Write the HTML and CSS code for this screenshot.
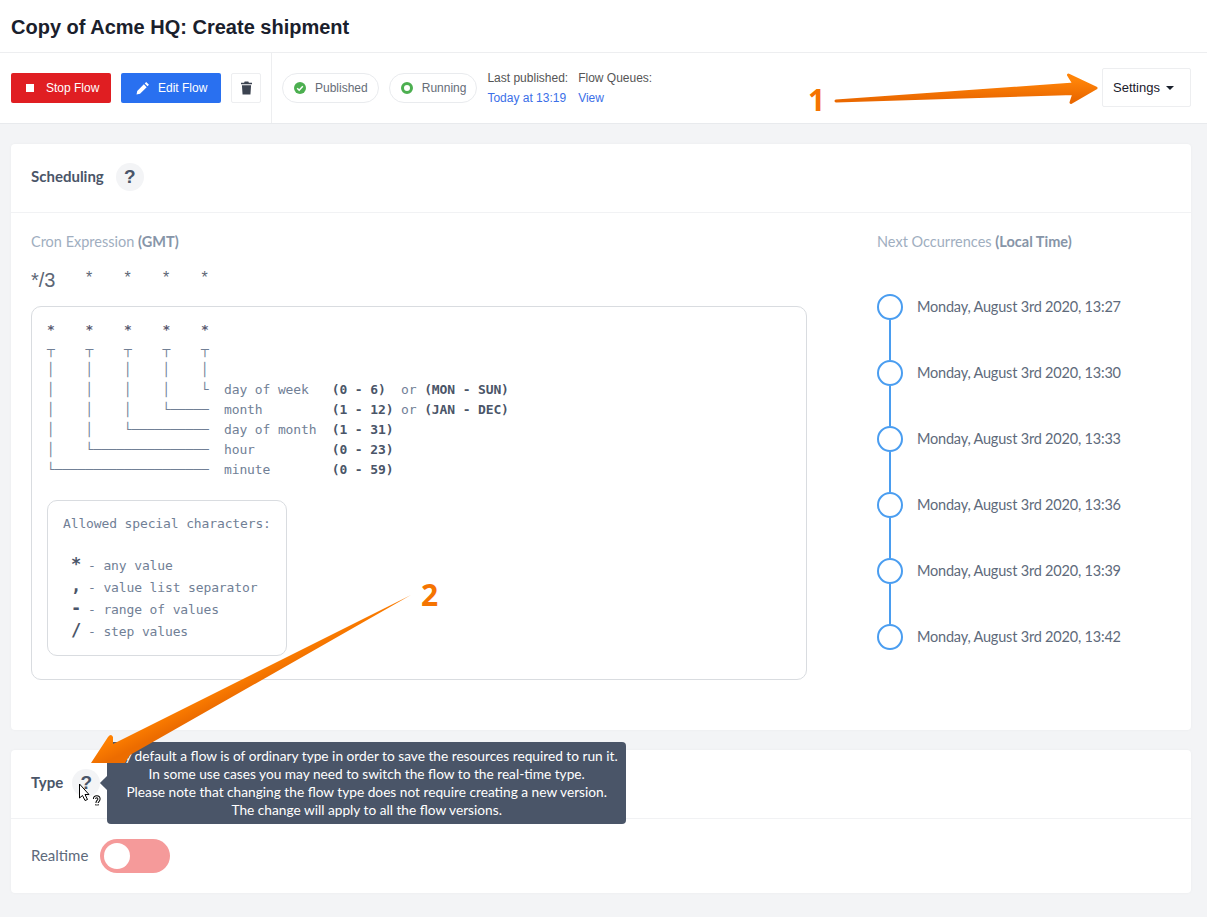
FILE: index.html
```html
<!DOCTYPE html>
<html lang="en">
<head>
  <meta charset="UTF-8" />
  <title>Copy of Acme HQ: Create shipment</title>
  <link rel="stylesheet" href="styles.css">
</head>
<body>
  <header class="title-bar">
    <h1>Copy of Acme HQ: Create shipment</h1>
  </header>

  <div class="toolbar">
    <div class="actions">
      <button class="btn btn-stop"><span class="stop-mark"></span>Stop Flow</button>
      <button class="btn btn-edit">
        <svg class="btn-icon" viewBox="0 0 16 16"><path fill="#fff" d="M11.6 1.2l3.2 3.2-1.6 1.6-3.2-3.2zM9 3.8l3.2 3.2-7.6 7.600-4 .8.8-4z"/></svg>
        Edit Flow
      </button>
      <button class="btn-trash">
        <svg viewBox="0 0 12 14" width="11" height="14"><path fill="#3c4350" d="M4 0h4l.6 1.200H12v1.600H0V1.200h3.400zM1 4h10l-.7 10H1.700z"/></svg>
      </button>
    </div>
    <div class="status">
      <span class="pill">
        <svg viewBox="0 0 12 12" width="12" height="12"><circle cx="6" cy="6" r="6" fill="#4caf50"/><path d="M3.200 6.200l2 2 3.600-4" fill="none" stroke="#fff" stroke-width="1.500"/></svg>
        Published
      </span>
      <span class="pill">
        <span class="running-dot"></span>
        Running
      </span>
      <div class="meta">
        <span>Last published:</span>
        <a>Today at 13:19</a>
      </div>
      <div class="meta">
        <span>Flow Queues:</span>
        <a>View</a>
      </div>
    </div>
    <button class="btn-settings">Settings<span class="caret"></span></button>
  </div>

  <main class="content">
    <section class="card">
      <div class="card-head">
        <h2>Scheduling</h2>
        <span class="help">?</span>
      </div>
      <div class="schedule">
        <div class="cron">
          <div class="label">Cron Expression <b>(GMT)</b></div>
          <div class="expr">
            <span class="expr-first">*/3</span><span>*</span><span>*</span><span>*</span><span>*</span>
          </div>
          <div class="cron-box">
            <pre class="diagram"><b>*    *    *    *    *</b>
┬    ┬    ┬    ┬    ┬
│    │    │    │    │
│    │    │    │    └  day of week   <i>(0 - 6)</i>  or <i>(MON - SUN)</i>
│    │    │    └─────  month         <i>(1 - 12)</i> or <i>(JAN - DEC)</i>
│    │    └──────────  day of month  <i>(1 - 31)</i>
│    └───────────────  hour          <i>(0 - 23)</i>
└────────────────────  minute        <i>(0 - 59)</i></pre>
            <div class="special">
              <div class="special-title">Allowed special characters:</div>
              <div class="special-row"><b>*</b>- any value</div>
              <div class="special-row"><b>,</b>- value list separator</div>
              <div class="special-row"><b>-</b>- range of values</div>
              <div class="special-row"><b>/</b>- step values</div>
            </div>
          </div>
        </div>
        <div class="next">
          <div class="label">Next Occurrences <b>(Local Time)</b></div>
          <ul class="timeline">
            <li>Monday, August 3rd 2020, 13:27</li>
            <li>Monday, August 3rd 2020, 13:30</li>
            <li>Monday, August 3rd 2020, 13:33</li>
            <li>Monday, August 3rd 2020, 13:36</li>
            <li>Monday, August 3rd 2020, 13:39</li>
            <li>Monday, August 3rd 2020, 13:42</li>
          </ul>
        </div>
      </div>
    </section>

    <section class="card">
      <div class="card-head card-head-type">
        <h2>Type</h2>
        <span class="help">?
          <div class="tooltip">
            By default a flow is of ordinary type in order to save the resources required to run it.<br>
            In some use cases you may need to switch the flow to the real-time type.<br>
            Please note that changing the flow type does not require creating a new version.<br>
            The change will apply to all the flow versions.
          </div>
        </span>
      </div>
      <div class="realtime">
        <span class="realtime-label">Realtime</span>
        <span class="toggle"><span class="knob"></span></span>
      </div>
    </section>
  </main>

  <!-- annotations drawn over the screenshot -->
  <svg class="overlay" viewBox="0 0 1207 917" width="1207" height="917">
    <defs>
      <linearGradient id="orange" gradientUnits="userSpaceOnUse" x1="0" y1="80" x2="0" y2="100">
        <stop offset="0" stop-color="#ff8408"/>
        <stop offset="1" stop-color="#ea6800"/>
      </linearGradient>
      <linearGradient id="orange2" gradientUnits="userSpaceOnUse" x1="250" y1="670" x2="258" y2="686">
        <stop offset="0" stop-color="#ff8000"/>
        <stop offset="1" stop-color="#ec6c00"/>
      </linearGradient>
    </defs>
    <path fill="url(#orange)" stroke="url(#orange)" stroke-width="3" stroke-linejoin="round" d="M836 101L1074 84 1068.500 75 1096 88 1071 102.500 1074 93.500z"/>
    <path fill="url(#orange2)" d="M411 595L113 744 113 737Q111 733 108 737L91 763 125 763 130 755z"/>
    <!-- cursor with question mark -->
    <path fill="#fff" stroke="#000" stroke-width="1" stroke-linejoin="round" d="M79.500 784v14l3-2.500 2.500 5 2.500-1-2.500-5h4z"/>
    <path fill="none" stroke="#000" stroke-width="3.200" d="M94.500 799c0-3 4.500-3 4.500 0 0 2-2 2-2 4M97 804v1.500"/>
    <path fill="none" stroke="#fff" stroke-width="1.200" d="M94.500 799c0-3 4.500-3 4.500 0 0 2-2 2-2 4M97 804v1.500"/>
  </svg>
  <span class="num num-one">1</span>
  <span class="num num-two">2</span>
</body>
</html>
```

FILE: styles.css
```css
*, *::before, *::after {
  box-sizing: border-box;
}
body {
  margin: 0;
  height: 917px;
  overflow: hidden;
  position: relative;
  background: #f3f4f6;
  font-family: 'Liberation Sans', Arial, sans-serif;
  color: #4a5568;
}
.title-bar {
  height: 53px;
  padding-left: 11px;
  display: flex;
  align-items: center;
  background: #fff;
  border-bottom: 1px solid #edeef0;
}
h1 {
  margin: 2px 0 0;
  font-size: 20px;
  font-weight: bold;
  color: #1a202c;
}
.toolbar {
  height: 71px;
  display: flex;
  align-items: stretch;
  background: #fff;
  border-bottom: 1px solid #e8eaed;
}
.actions {
  width: 272px;
  padding-left: 11px;
  display: flex;
  align-items: center;
  gap: 10px;
  border-right: 1px solid #edeef0;
}
.btn {
  width: 100px;
  height: 30px;
  display: flex;
  align-items: center;
  border: none;
  border-radius: 2px;
  color: #fff;
  font-family: inherit;
  font-size: 12px;
  padding: 0 0 0 15px;
}
.btn-stop {
  background: #e01e22;
}
.btn-edit {
  background: #2970f0;
}
.stop-mark {
  width: 8px;
  height: 8px;
  margin-right: 12px;
  background: #fff;
}
.btn-icon {
  width: 14px;
  height: 14px;
  margin-right: 8px;
}
.btn-trash {
  width: 30px;
  height: 30px;
  display: flex;
  align-items: center;
  justify-content: center;
  padding: 0;
  background: #fff;
  border: 1px solid #edeef0;
  border-radius: 2px;
}
.status {
  flex: 1;
  padding-left: 10px;
  display: flex;
  align-items: center;
  gap: 10px;
}
.pill {
  height: 30px;
  padding: 0 10px 0 11px;
  display: flex;
  align-items: center;
  gap: 9px;
  border: 1px solid #e9ebee;
  border-radius: 15px;
  font-size: 12px;
  color: #666d78;
}
.running-dot {
  width: 12px;
  height: 12px;
  border: 3px solid #4caf50;
  border-radius: 50%;
}
.meta {
  display: flex;
  flex-direction: column;
  gap: 7px;
  font-size: 12px;
  line-height: 13px;
  color: #555;
}
.meta a {
  color: #3b6fe8;
}
.btn-settings {
  width: 89px;
  height: 39px;
  margin: 15px 16px 0 0;
  padding: 0 0 0 10px;
  text-align: left;
  background: #fff;
  border: 1px solid #edeef0;
  border-radius: 2px;
  font-family: inherit;
  font-size: 13px;
  color: #1a202c;
}
.caret {
  display: inline-block;
  margin-left: 6px;
  vertical-align: 2px;
  border: 4.500px solid transparent;
  border-top-color: #1a202c;
  border-bottom: 0;
}
.content {
  padding: 20px 16px 0 11px;
  display: flex;
  flex-direction: column;
  gap: 20px;
  font-family: Lato, 'Noto Sans', sans-serif;
}
.card {
  background: #fff;
  border-radius: 4px;
  box-shadow: 0 0 3px rgba(0, 0, 0, 0.04);
}
.card-head {
  height: 69px;
  padding: 0 0 2px 20px;
  display: flex;
  align-items: center;
  gap: 12px;
  border-bottom: 1px solid #f1f2f4;
}
.card-head-type {
  gap: 9px;
}
h2 {
  margin: 0 0 2px;
  font-size: 15px;
  font-weight: bold;
  color: #4a5568;
}
.help {
  position: relative;
  width: 28px;
  height: 28px;
  display: flex;
  align-items: center;
  justify-content: center;
  border-radius: 50%;
  background: #f3f4f6;
  font-family: 'Liberation Sans', sans-serif;
  font-size: 19px;
  font-weight: bold;
  color: #4a5568;
}
.schedule {
  display: flex;
  height: 517px;
  padding: 20px 0 0 20px;
}
.cron {
  width: 846px;
}
.label {
  font-size: 14.500px;
  line-height: 18px;
  color: #a0aec0;
}
.label b {
  color: #8795a8;
}
.expr {
  height: 20px;
  margin-top: 19px;
  display: flex;
  font-family: 'Liberation Sans', sans-serif;
  color: #5c6675;
}
.expr span {
  width: 38.500px;
  text-align: center;
  font-size: 16px;
  line-height: 16px;
}
.expr .expr-first {
  width: 38.750px;
  text-align: left;
  font-size: 20px;
  line-height: 20px;
}
.cron-box {
  width: 776px;
  height: 374px;
  margin-top: 16px;
  padding: 13px 15px;
  border: 1px solid #d9dce0;
  border-radius: 10px;
}
.diagram {
  margin: 0;
  font-family: 'DejaVu Sans Mono', monospace;
  font-size: 13px;
  line-height: 20px;
  letter-spacing: -0.130px;
  color: #718096;
}
.diagram b {
  color: #5a5a70;
}
.diagram i {
  font-style: normal;
  font-weight: bold;
  color: #4a5568;
}
.special {
  width: 240px;
  height: 156px;
  margin-top: 20px;
  padding: 13px 15px;
  border: 1px solid #d9dce0;
  border-radius: 10px;
  font-family: 'DejaVu Sans Mono', monospace;
  font-size: 13px;
  letter-spacing: -0.130px;
  color: #718096;
}
.special-title {
  height: 20px;
  line-height: 20px;
  margin-bottom: 21px;
}
.special-row {
  height: 22px;
  line-height: 22px;
  white-space: pre;
  display: flex;
}
.special-row b {
  width: 25px;
  padding-left: 8px;
  font-size: 17px;
  line-height: 18px;
  color: #4a5568;
}
.next {
  flex: 1;
}
.timeline {
  list-style: none;
  margin: 43px 0 0;
  padding: 0;
}
.timeline li {
  position: relative;
  height: 66px;
  padding-left: 40px;
  font-size: 14.500px;
  letter-spacing: -0.200px;
  line-height: 26px;
  color: #5e6a7b;
}
.timeline li::before {
  content: "";
  position: absolute;
  left: 0;
  top: 0;
  width: 26px;
  height: 26px;
  border: 2.500px solid #4a9df0;
  border-radius: 50%;
  background: #fff;
}
.timeline li::after {
  content: "";
  position: absolute;
  left: 12px;
  top: 26px;
  width: 2px;
  height: 40px;
  background: #4a9df0;
}
.timeline li:last-child::after {
  display: none;
}
.tooltip {
  position: absolute;
  left: 35px;
  top: -27px;
  width: 519px;
  height: 82px;
  padding-top: 5px;
  background: #4a5568;
  border-radius: 4px;
  text-align: center;
  font-family: Lato, 'Noto Sans', sans-serif;
  font-size: 13.700px;
  font-weight: normal;
  line-height: 18px;
  color: #fff;
  white-space: nowrap;
}
.tooltip::before {
  content: "";
  position: absolute;
  left: -5px;
  top: 36px;
  width: 10px;
  height: 10px;
  background: #4a5568;
  transform: rotate(45deg);
}
.realtime {
  height: 74px;
  padding-left: 20px;
  display: flex;
  align-items: center;
  gap: 12px;
  font-size: 15px;
  color: #5e6a7b;
}
.realtime-label {
  margin-bottom: 2px;
}
.toggle {
  width: 70px;
  height: 34px;
  padding: 4px;
  border-radius: 17px;
  background: #f59a9a;
}
.knob {
  display: block;
  width: 26px;
  height: 26px;
  border-radius: 50%;
  background: #fff;
}
.overlay {
  position: absolute;
  left: 0;
  top: 0;
  pointer-events: none;
}
.num {
  position: absolute;
  font-family: 'Open Sans', sans-serif;
  font-size: 30px;
  font-weight: bold;
  line-height: 30px;
  color: #f57400;
}
.num-one {
  left: 808px;
  top: 85px;
}
.num-two {
  left: 421px;
  top: 580px;
}
```
